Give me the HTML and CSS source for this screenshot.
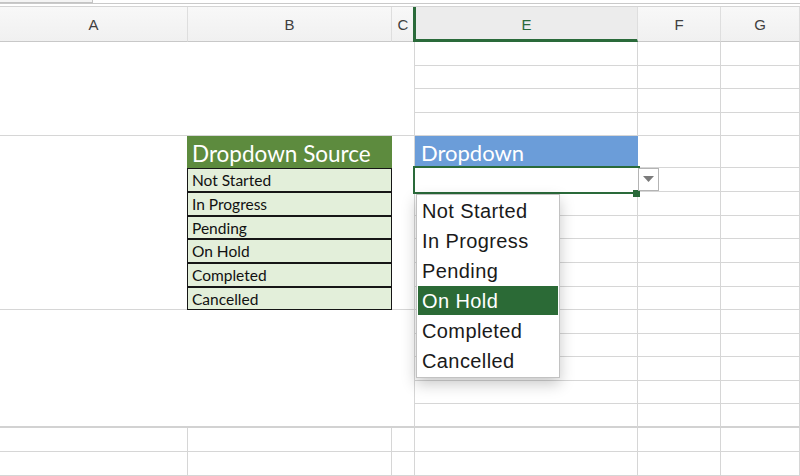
FILE: index.html
```html
<!DOCTYPE html>
<html lang="en">
<head>
    <meta charset="UTF-8">
    <meta name="viewport" content="width=device-width, initial-scale=1.0">
    <title>Dropdown list</title>
    <link rel="stylesheet" href="styles.css">
</head>
<body>
    <div class="sheet">
        <div class="topbar"><div class="name-box"></div></div>

        <div class="col-heads">
            <div class="col-head">A</div>
            <div class="col-head">B</div>
            <div class="col-head">C</div>
            <div class="col-head active">E</div>
            <div class="col-head">F</div>
            <div class="col-head">G</div>
        </div>

        <div class="grid">
            <!-- left side, merged blocks -->
            <div class="cell merged-top"></div>
            <div class="cell merged-a"></div>
            <div class="src-head">Dropdown Source</div>
            <div class="src-item r6">Not Started</div>
            <div class="src-item r7">In Progress</div>
            <div class="src-item r8">Pending</div>
            <div class="src-item r9">On Hold</div>
            <div class="src-item r10">Completed</div>
            <div class="src-item r11">Cancelled</div>
            <div class="cell merged-c"></div>
            <div class="cell merged-bottom"></div>
            <div class="cell a r17"></div><div class="cell b r17"></div><div class="cell c r17"></div>
            <div class="cell a r18"></div><div class="cell b r18"></div><div class="cell c r18"></div>

            <!-- right side, one cell per row -->
            <div class="cell e r1"></div><div class="cell f r1"></div><div class="cell g r1"></div>
            <div class="cell e r2"></div><div class="cell f r2"></div><div class="cell g r2"></div>
            <div class="cell e r3"></div><div class="cell f r3"></div><div class="cell g r3"></div>
            <div class="cell e r4"></div><div class="cell f r4"></div><div class="cell g r4"></div>
            <div class="dd-head">Dropdown</div><div class="cell f r5"></div><div class="cell g r5"></div>
            <div class="cell e r6 selected"></div><div class="cell f r6"></div><div class="cell g r6"></div>
            <div class="cell e r7"></div><div class="cell f r7"></div><div class="cell g r7"></div>
            <div class="cell e r8"></div><div class="cell f r8"></div><div class="cell g r8"></div>
            <div class="cell e r9"></div><div class="cell f r9"></div><div class="cell g r9"></div>
            <div class="cell e r10"></div><div class="cell f r10"></div><div class="cell g r10"></div>
            <div class="cell e r11"></div><div class="cell f r11"></div><div class="cell g r11"></div>
            <div class="cell e r12"></div><div class="cell f r12"></div><div class="cell g r12"></div>
            <div class="cell e r13"></div><div class="cell f r13"></div><div class="cell g r13"></div>
            <div class="cell e r14"></div><div class="cell f r14"></div><div class="cell g r14"></div>
            <div class="cell e r15"></div><div class="cell f r15"></div><div class="cell g r15"></div>
            <div class="cell e r16 thick"></div><div class="cell f r16 thick"></div><div class="cell g r16 thick"></div>
            <div class="cell e r17"></div><div class="cell f r17"></div><div class="cell g r17"></div>
            <div class="cell e r18"></div><div class="cell f r18"></div><div class="cell g r18"></div>
        </div>

        <!-- overlays -->
        <div class="fill-handle"></div>
        <div class="dd-button">
            <svg width="11" height="6" viewBox="0 0 11 6"><path d="M0 0 H11 L5.5 6 Z" fill="#7b7b7b"/></svg>
        </div>
        <ul class="dd-list">
            <li class="dd-option">Not Started</li>
            <li class="dd-option">In Progress</li>
            <li class="dd-option">Pending</li>
            <li class="dd-option hover">On Hold</li>
            <li class="dd-option">Completed</li>
            <li class="dd-option">Cancelled</li>
        </ul>
    </div>
</body>
</html>
```

FILE: styles.css
```css
body {
	margin: 0;
	background: #fff;
	overflow: hidden;
}
.sheet {
	position: relative;
	width: 800px;
	height: 476px;
	overflow: hidden;
	font-family: "Liberation Sans", Arial, sans-serif;
}
.topbar {
	height: 3px;
	border-bottom: 1px solid #c9c9c9;
}
.name-box {
	width: 92px;
	height: 2px;
	background: #f4f4f4;
	border-right: 1px solid #c4c4c4;
	border-bottom: 1px solid #c4c4c4;
}
.col-heads {
	display: grid;
	grid-template-columns: 188px 204px 23px 223px 83px 79px;
	height: 35px;
	margin-top: 2px;
	border-top: 1px solid #d4d4d4;
	background: linear-gradient(#f8f8f8, #f0f0f0);
}
.col-head {
	display: flex;
	align-items: center;
	justify-content: center;
	box-sizing: border-box;
	border-right: 1px solid #dedede;
	border-bottom: 1px solid #c8c8c8;
	color: #3f3f3f;
	font-size: 15px;
}
.col-head.active {
	margin-left: -2px;
	border-left: 3px solid #2a6a3a;
	border-bottom: 3px solid #2a6a3a;
	background: #ececec;
	color: #2a6a3a;
	padding-top: 2px;
}
.grid {
	display: grid;
	grid-template-columns: 188px 204px 23px 223px 83px 79px;
	grid-template-rows: 24px 23px 24px 23px 32px 24px 24px 23px 24px 24px 23px 24px 23px 24px 23px 24px 24px 24px;
}
.cell {
	box-sizing: border-box;
	border-right: 1px solid #d6d6d6;
	border-bottom: 1px solid #d6d6d6;
}
.cell.thick { border-bottom: 2px solid #d2d2d2; }

.a { grid-column: 1; }
.b { grid-column: 2; }
.c { grid-column: 3; }
.e { grid-column: 4; }
.f { grid-column: 5; }
.g { grid-column: 6; }
.r1 { grid-row: 1; } .r2 { grid-row: 2; } .r3 { grid-row: 3; }
.r4 { grid-row: 4; } .r5 { grid-row: 5; } .r6 { grid-row: 6; }
.r7 { grid-row: 7; } .r8 { grid-row: 8; } .r9 { grid-row: 9; }
.r10 { grid-row: 10; } .r11 { grid-row: 11; } .r12 { grid-row: 12; }
.r13 { grid-row: 13; } .r14 { grid-row: 14; } .r15 { grid-row: 15; }
.r16 { grid-row: 16; } .r17 { grid-row: 17; } .r18 { grid-row: 18; }

.merged-top { grid-column: 1 / 4; grid-row: 1 / 5; }
.merged-a { grid-column: 1; grid-row: 5 / 12; border-right: none; }
.merged-c { grid-column: 3; grid-row: 5 / 12; }
.merged-bottom { grid-column: 1 / 4; grid-row: 12 / 17; border-bottom: 2px solid #d2d2d2; }

.src-head {
	grid-column: 2;
	grid-row: 5;
	margin-left: -1px;
	padding-left: 5px;
	background: #5d8b3e;
	color: #fff;
	font-family: Lato, "Open Sans", sans-serif;
	font-size: 22.5px;
	line-height: 36px;
}
.src-item {
	grid-column: 2;
	margin-left: -1px;
	padding-left: 4px;
	border: 1px solid #161616;
	background: #e3efda;
	color: #111;
	font-family: Lato, "Open Sans", sans-serif;
	font-size: 15.5px;
	line-height: 22px;
}
.dd-head {
	grid-column: 4;
	grid-row: 5;
	height: 30px;
	padding-left: 6px;
	background: #6b9dd9;
	color: #fff;
	font-family: Lato, "Open Sans", sans-serif;
	font-size: 22px;
	line-height: 34px;
}
.cell.selected {
	position: relative;
	z-index: 1;
	border-color: transparent;
	outline: 2px solid #2a6a3a;
}
.fill-handle {
	position: absolute;
	left: 633px;
	top: 190px;
	width: 7px;
	height: 7px;
	background: #2a6a3a;
	z-index: 2;
}
.dd-button {
	position: absolute;
	left: 638px;
	top: 168px;
	width: 21px;
	height: 23px;
	box-sizing: border-box;
	border: 1px solid #b4b4b4;
	background: #fff;
	display: flex;
	align-items: center;
	justify-content: center;
	padding-bottom: 1px;
	z-index: 2;
}
.dd-list {
	position: absolute;
	left: 416px;
	top: 194px;
	width: 144px;
	box-sizing: border-box;
	margin: 0;
	padding: 1px 0;
	list-style: none;
	background: #fff;
	border: 1px solid #c2c2c2;
	box-shadow: 0 6px 14px rgba(0, 0, 0, 0.22);
	z-index: 3;
}
.dd-option {
	height: 30px;
	margin: 0 1px;
	padding-left: 4px;
	color: #1a1a1a;
	font-size: 20px;
	letter-spacing: 0.4px;
	line-height: 30px;
}
.dd-option.hover {
	height: 29px;
	margin-bottom: 1px;
	background: #2b6a36;
	color: #fff;
}
```
